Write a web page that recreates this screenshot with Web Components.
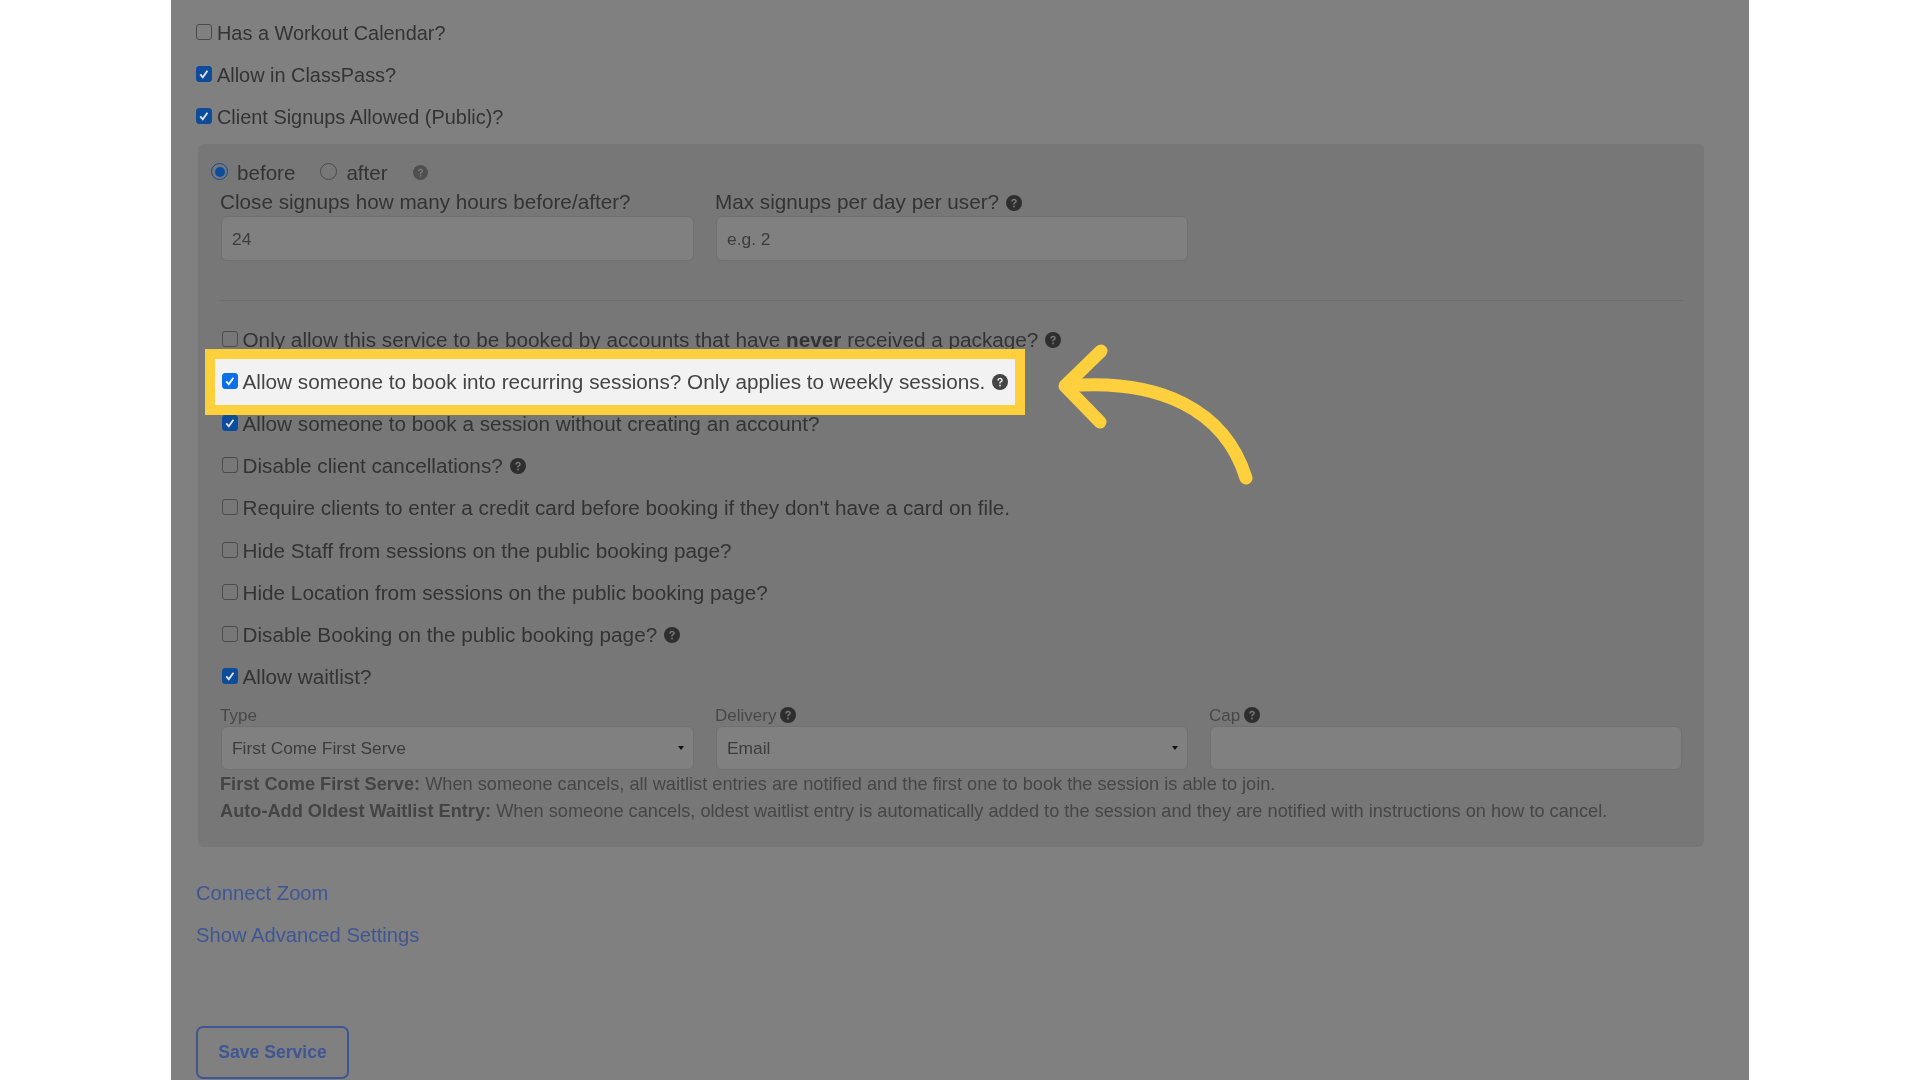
<!DOCTYPE html>
<html>
<head>
<meta charset="utf-8">
<style>
html, body { margin: 0; height: 1080px; overflow: hidden; background: #fff; }
</style>
</head>
<body>
<service-form></service-form>

<script>
const helpIcon = `<svg viewBox="0 0 24 24" width="100%" height="100%"><circle cx="12" cy="12" r="12" fill="currentColor"/><path d="M8 9.600c0-2.400 1.800-3.800 4.100-3.800 2.300 0 4 1.400 4 3.400 0 1.700-1 2.500-2.100 3.200-.9.600-1.100.9-1.100 1.800h-2.100c0-1.700.5-2.400 1.700-3.200 1-.6 1.500-1.100 1.500-1.800 0-.8-.7-1.400-1.800-1.400-1.100 0-1.800.7-1.900 1.800z" fill="var(--hole, #7a7a7a)"/><rect x="10.800" y="16" width="2.400" height="2.500" fill="var(--hole, #7a7a7a)"/></svg>`;

class HelpIcon extends HTMLElement {
    connectedCallback() {
        this.attachShadow({ mode: "open" }).innerHTML = `
        <style>
        :host { display: inline-block; width: var(--help-size, 16px); height: var(--help-size, 16px); margin-left: 7px; color: #2e2e2e; vertical-align: -1px; }
        </style>${helpIcon}`;
    }
}

class CheckRow extends HTMLElement {
    connectedCallback() {
        const checked = this.hasAttribute("checked");
        this.attachShadow({ mode: "open" }).innerHTML = `
        <style>
        :host { display: flex; align-items: center; height: 42.2px; font-size: 19.9px; color: #333; white-space: nowrap; }
        .box { width: 16px; height: 16px; box-sizing: border-box; border-radius: 3px; border: 1px solid #4b4b4b; margin: -2px 5px 0 0; flex: none; background: transparent; }
        .box.on { background: var(--check-color, #0d4c9b); border-color: var(--check-color, #0d4c9b); }
        svg { display: block; width: 100%; height: 100%; }
        </style>
        <span class="box ${checked ? "on" : ""}">${checked ? `<svg viewBox="0 0 15 15"><path d="M3.500 8l2.700 3 5-7" fill="none" stroke="var(--tick, #e2e2e2)" stroke-width="2"/></svg>` : ""}</span>
        <span><slot></slot></span>`;
    }
}

class RadioOption extends HTMLElement {
    connectedCallback() {
        const checked = this.hasAttribute("checked");
        this.attachShadow({ mode: "open" }).innerHTML = `
        <style>
        :host { display: inline-flex; align-items: center; color: #333; font-size: 20.6px; margin-right: 25px; }
        .dot { width: 17px; height: 17px; box-sizing: border-box; border-radius: 50%; margin: -2px 9px 0 0; border: 1px solid ${checked ? "#0d4c9b" : "#4b4b4b"}; display: flex; align-items: center; justify-content: center; }
        .dot i { width: 10px; height: 10px; border-radius: 50%; background: #0d4c9b; display: ${checked ? "block" : "none"}; }
        </style>
        <span class="dot"><i></i></span><slot></slot>`;
    }
}

class FieldBox extends HTMLElement {
    connectedCallback() {
        const select = this.hasAttribute("select");
        const label = this.getAttribute("label") || "";
        const value = this.getAttribute("value") || "";
        const small = this.hasAttribute("small");
        this.attachShadow({ mode: "open" }).innerHTML = `
        <style>
        :host { display: block; flex: none; width: 473px; }
        .label { height: ${small ? "21px" : "28px"}; display: flex; align-items: center; font-size: ${small ? "17px" : "20.7px"}; color: ${small ? "#484848" : "#333"}; white-space: nowrap; }
        ::slotted(help-icon) { margin-top: ${small ? "-1px" : "-3px"}; margin-left: ${small ? "4px" : "7px"}; }
        .input { height: ${small ? "44px" : "45px"}; margin-left: 1px; box-sizing: border-box; border: 1px solid #707070; border-radius: 6px; background: #808080; padding: ${small ? "0" : "2px"} 10px 0; display: flex; align-items: center; justify-content: space-between; font-size: 17.4px; color: #3c3c3c; white-space: nowrap; }
        .caret { width: 0; height: 0; border: 3px solid transparent; border-top: 4px solid #111; border-bottom: 0; margin-right: -1px; }
        </style>
        <div class="label">${label}<slot></slot></div>
        <div class="input"><span>${value}</span>${select ? `<span class="caret"></span>` : ""}</div>`;
    }
}

class ServiceForm extends HTMLElement {
    connectedCallback() {
        this.attachShadow({ mode: "open" }).innerHTML = `
        <style>
        :host { display: block; width: 1578px; height: 1080px; margin-left: 171px; box-sizing: border-box; background: #808080; font-family: "Liberation Sans", Arial, sans-serif; position: relative; }
        .content { padding: 12px 25px 0; filter: blur(0.4px); }
        .panel { margin: 5px 20px 0 2px; height: 703px; box-sizing: border-box; background: #777; border-radius: 6px; padding: 14px 21px 0 22px; }
        .panel check-row { font-size: 20.72px; padding-left: 1.5px; }
        .radios { height: 30px; display: flex; align-items: center; margin-left: -9px; --help-size: 15px; }
        .radios help-icon { color: #4f4f4f; margin-left: 0; }
        .cols { display: flex; gap: 21px; }
        .cols field-box:first-child { width: 474px; }
        hr { border: 0; border-top: 1px solid #6d6d6d; margin: 39px 0 18px; }
        .hilite { position: relative; z-index: 1; margin: -2px 0 -1.8px -5px; width: 800px; height: 46px; box-sizing: border-box; padding-left: 5px; background: #f2f2f2; outline: 10px solid #ffd03d; --check-color: #0b6fe8; --tick: #fff; --hole: #f2f2f2; }
        .hilite check-row { height: 46px; color: #444; }
        .hilite help-icon { color: #444; }
        .notes { font-size: 18.2px; color: #464646; line-height: 27px; margin-top: 1px; white-space: nowrap; }
        .notes b { color: #444; }
        .waitlist { margin-top: 7px; }
        .links { margin-top: 26px; }
        a { display: flex; align-items: center; height: 42px; color: #3e5694; font-size: 20.2px; text-decoration: none; }
        button { display: block; margin-top: 69px; width: 153px; height: 53px; padding-top: 2px; box-sizing: border-box; background: transparent; border: 2px solid #3e5694; border-radius: 7px; color: #3e5694; font: bold 17.6px "Liberation Sans", Arial, sans-serif; }
        .arrow { position: absolute; left: -171px; top: 0; width: 1920px; height: 1080px; pointer-events: none; z-index: 2; }
        </style>
        <div class="content">
        <check-row>Has a Workout Calendar?</check-row>
        <check-row checked>Allow in ClassPass?</check-row>
        <check-row checked>Client Signups Allowed (Public)?</check-row>
        <div class="panel">
          <div class="radios">
            <radio-option checked>before</radio-option>
            <radio-option>after</radio-option>
            <help-icon></help-icon>
          </div>
          <div class="cols">
            <field-box label="Close signups how many hours before/after?" value="24"></field-box>
            <field-box label="Max signups per day per user?" value="e.g. 2"><help-icon></help-icon></field-box>
          </div>
          <hr>
          <check-row>Only allow this service to be booked by accounts that have&nbsp;<b>never</b>&nbsp;received a package?<help-icon></help-icon></check-row>
          <div class="hilite"><check-row checked>Allow someone to book into recurring sessions? Only applies to weekly sessions.<help-icon></help-icon></check-row></div>
          <check-row checked>Allow someone to book a session without creating an account?</check-row>
          <check-row>Disable client cancellations?<help-icon></help-icon></check-row>
          <check-row>Require clients to enter a credit card before booking if they don't have a card on file.</check-row>
          <check-row>Hide Staff from sessions on the public booking page?</check-row>
          <check-row>Hide Location from sessions on the public booking page?</check-row>
          <check-row>Disable Booking on the public booking page?<help-icon></help-icon></check-row>
          <check-row checked>Allow waitlist?</check-row>
          <div class="cols waitlist">
            <field-box small select label="Type" value="First Come First Serve"></field-box>
            <field-box small select label="Delivery" value="Email"><help-icon></help-icon></field-box>
            <field-box small label="Cap"><help-icon></help-icon></field-box>
          </div>
          <div class="notes">
            <div><b>First Come First Serve:</b> When someone cancels, all waitlist entries are notified and the first one to book the session is able to join.</div>
            <div><b>Auto-Add Oldest Waitlist Entry:</b> When someone cancels, oldest waitlist entry is automatically added to the session and they are notified with instructions on how to cancel.</div>
          </div>
        </div>
        <div class="links">
          <a href="#">Connect Zoom</a>
          <a href="#">Show Advanced Settings</a>
        </div>
        <button>Save Service</button>
        </div>
        <svg class="arrow" viewBox="0 0 1920 1080" fill="none" stroke="#ffd03d" stroke-width="13" stroke-linecap="round" stroke-linejoin="round">
          <path d="M1246 478C1225 410 1160 378 1066 386"/>
          <path d="M1101 351L1065 386L1100 422"/>
        </svg>`;
    }
}

customElements.define("help-icon", HelpIcon);
customElements.define("check-row", CheckRow);
customElements.define("radio-option", RadioOption);
customElements.define("field-box", FieldBox);
customElements.define("service-form", ServiceForm);
</script>
</body>
</html>
